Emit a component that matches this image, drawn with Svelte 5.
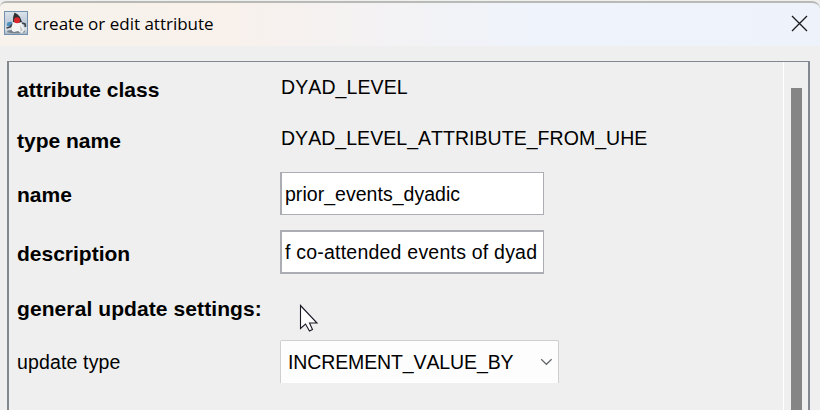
<script>
  const attributeClass = 'DYAD_LEVEL';
  const typeName = 'DYAD_LEVEL_ATTRIBUTE_FROM_UHE';
  const name = 'prior_events_dyadic';
  const description = 'f co-attended events of dyad';
  const updateType = 'INCREMENT_VALUE_BY';
</script>

<div class="window">
  <header>
    <svg class="duke" width="24" height="24" viewBox="0 0 24 24">
      <defs>
        <linearGradient id="sky" x1="0" y1="0" x2="0" y2="1">
          <stop offset="0" stop-color="#dde3ea" />
          <stop offset=".5" stop-color="#bccbda" />
          <stop offset=".75" stop-color="#dce1e6" />
          <stop offset="1" stop-color="#a3b0bd" />
        </linearGradient>
      </defs>
      <rect x=".5" y=".5" width="23" height="23" fill="url(#sky)" stroke="#7390ae" />
      <ellipse cx="12" cy="20.5" rx="9" ry="1.8" fill="#77838e" />
      <path d="M3.5 11.5l4-1 1 3-3 2-3-1z" fill="#4f8fbd" />
      <path d="M9 13l-3 3-3.5 1M18 12l3 1 .5 3" fill="none" stroke="#3f454a" stroke-width="1.8" />
      <path d="M9 11q4-2 8 0l3 7q0 4-3 4l-3-2-4 1-2-1q-1-5 1-9z" fill="#f4f4f3" />
      <path d="M10.5 1.5q3.5 1.5 5.5 4.5l2 5-4 1-5-1q-.5-5 1.5-9.500z" fill="#303032" />
      <circle cx="13" cy="9.200" r="3" fill="#dc282c" />
      <path d="M16 14l3 5-2.500 2z" fill="#c4c7c9" />
    </svg>
    <h1>create or edit attribute</h1>
    <button class="close" aria-label="Close">
      <svg width="17" height="17" viewBox="0 0 17 17">
        <path d="M1 1l15 15M16 1L1 16" fill="none" stroke="#17191d" stroke-width="1.3" />
      </svg>
    </button>
  </header>

  <main>
    <form>
      <div class="row class-row">
        <b>attribute class</b>
        <span class="value">{attributeClass}</span>
      </div>
      <div class="row type-row">
        <b>type name</b>
        <span class="value type">{typeName}</span>
      </div>
      <div class="row name-row">
        <b>name</b>
        <div class="field name">{name}</div>
      </div>
      <div class="row description-row">
        <b>description</b>
        <div class="field description">{description}</div>
      </div>
      <div class="row heading-row">
        <b>general update settings:</b>
      </div>
      <div class="row update-row">
        <span class="label">update type</span>
        <div class="select">
          <span>{updateType}</span>
          <svg width="13" height="8" viewBox="0 0 13 8">
            <path d="M1.2 1.2l5.2 5.1 5.2-5.1" fill="none" stroke="#62666a" stroke-width="1.2" />
          </svg>
        </div>
      </div>
    </form>
    <aside><div class="thumb"></div></aside>
  </main>

  <svg class="cursor" width="20" height="29" viewBox="0 0 20 29">
    <path d="M1.5 1.5v23l5-4.4 4 7 3-1.5-3-6.600H18z" fill="#fff" stroke="#191923" stroke-width="1.1" />
  </svg>
</div>

<style>
  .window {
    position: relative;
    box-sizing: border-box;
    width: 820px;
    height: 410px;
    padding-top: 1px;
    overflow: hidden;
    display: flex;
    flex-direction: column;
    background: #efefef;
    color: #000;
    font: 19.5px/24px "Liberation Sans", Arial, sans-serif;
    font-kerning: none;
    white-space: nowrap;
  }
  header {
    box-sizing: border-box;
    flex: none;
    height: 45px;
    padding: 0 12px 0 4px;
    border-top: 2px solid #b8bab6;
    border-radius: 6px 8px 0 0;
    display: flex;
    align-items: center;
    background: linear-gradient(90deg, #f7f2eb, #f8f1ec 28%, #eff3fb 65%, #eef2fb);
  }
  .duke { margin-top: -3px; }
  h1 {
    margin: -2px auto 0 6px;
    font: 400 17px/24px "Open Sans", "Noto Sans", sans-serif;
  }
  .close {
    display: flex;
    margin-top: -3px;
    padding: 0;
    border: 0;
    background: none;
  }
  main {
    flex: 1;
    display: flex;
    margin: 15px 10px 0 7px;
    border: 2px solid #828790;
    border-top-width: 1px;
    border-bottom: 0;
  }
  form { flex: 1; }
  .row {
    display: grid;
    grid-template-columns: 263px 1fr;
    align-items: start;
    padding-left: 8px;
  }
  .class-row, .type-row { height: 51px; }
  .name-row { height: 58px; }
  .description-row, .heading-row { height: 59px; }
  .update-row { height: 43px; }
  b { font-size: 21px; margin-top: 16px; }
  .name-row b { margin-top: 19px; }
  .description-row b { margin-top: 20px; }
  .heading-row b { letter-spacing: .09px; }
  .value { margin-top: 13px; padding-left: 1px; letter-spacing: .1px; }
  .type { letter-spacing: .04px; }
  .label { margin-top: 10px; letter-spacing: .15px; }
  .field {
    box-sizing: border-box;
    width: 264px;
    height: 43px;
    margin-top: 8px;
    padding: 9px 0 0 3px;
    border: solid #abadb3;
    border-width: 1px 1px 1px 2px;
    background: #fff;
    letter-spacing: .03px;
    overflow: hidden;
  }
  .description {
    height: 44px;
    padding-top: 8px;
    border-width: 2px 1px 2px 2px;
    letter-spacing: .22px;
  }
  .select {
    box-sizing: border-box;
    width: 279px;
    height: 43px;
    padding: 0 5px 0 7px;
    border: 1px solid #cfcfcf;
    border-bottom: 0;
    border-radius: 2px 2px 0 0;
    display: flex;
    align-items: center;
    justify-content: space-between;
    background: #fdfdfd;
    letter-spacing: -.12px;
  }
  aside {
    width: 24px;
    border-left: 1px solid #fff;
    display: flex;
  }
  .thumb {
    width: 11px;
    margin: 26px 0 0 7px;
    background: #858585;
  }
  .cursor {
    position: absolute;
    left: 299px;
    top: 304px;
  }
</style>
